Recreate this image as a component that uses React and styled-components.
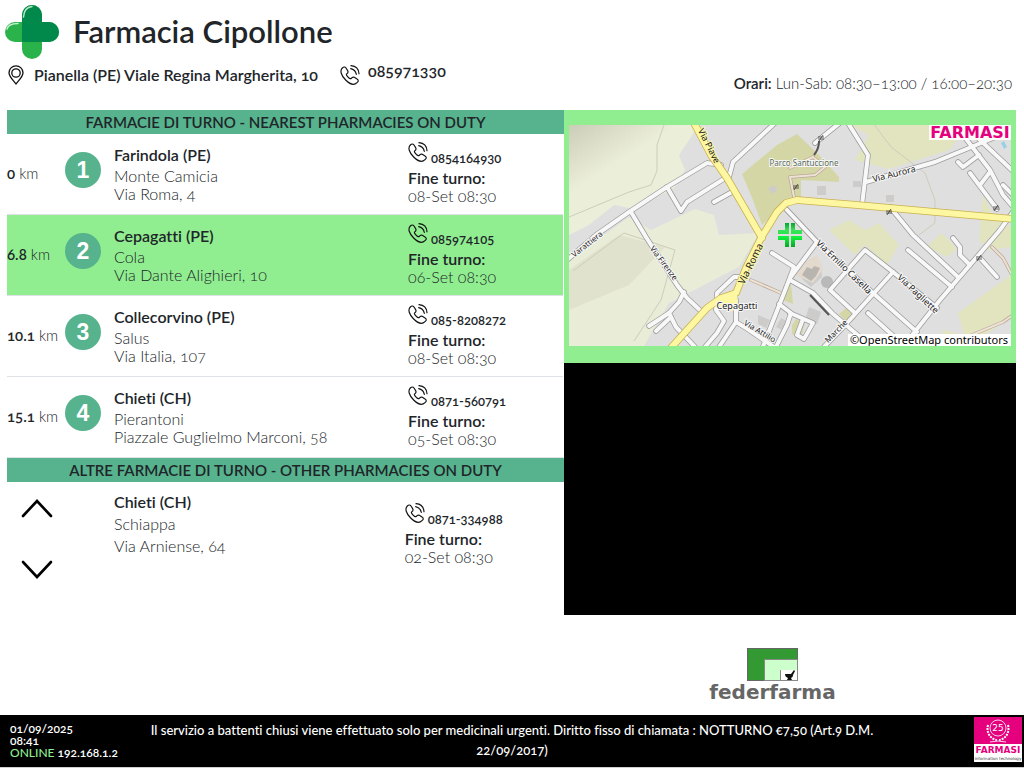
import React from 'react';
import styled, { createGlobalStyle } from 'styled-components';

const GlobalStyle = createGlobalStyle`
    * {
        box-sizing: border-box;
    }

    body {
        margin: 0;
        background-color: #fff;
        color: #212529;
        font-family: Lato, 'Open Sans', sans-serif;
        font-size: 16px;
        font-weight: 300;
        font-variant-numeric: oldstyle-nums;
        font-variant-ligatures: none;
    }
`;

const Page = styled.div`
    display: flex;
    flex-direction: column;
    min-height: 100vh;
`;

const Header = styled.header`
    display: flex;
    flex-direction: column;
    height: 110px;
    padding: 5px 12px 0 5px;
`;

const Brand = styled.div`
    display: flex;
    align-items: flex-start;
    gap: 14px;
    height: 54px;

    > svg {
        width: 54px;
        height: 54px;
    }
`;

const Title = styled.h1`
    margin: 0;
    padding-top: 8px;
    font-size: 31px;
    line-height: 36px;
    font-weight: 600;
`;

const Contacts = styled.div`
    display: flex;
    align-items: flex-start;
    height: 34px;
    padding-top: 6px;
    line-height: 20px;
    font-weight: 600;
`;

const Address = styled.span`
    display: flex;
    gap: 9px;
    margin-right: 22px;
`;

const MainPhone = styled.span`
    display: flex;
    gap: 8px;
    line-height: 12px;
`;

const Hours = styled.div`
    align-self: flex-end;
    margin-left: auto;
    font-size: 15px;
    line-height: 20px;
    font-weight: 300;
`;

const Strong = styled.strong`
    font-weight: 600;
`;

const Main = styled.main`
    display: grid;
    grid-template-columns: 557fr 452fr;
    flex: 1;
    padding: 0 8px 0 7px;
`;

const SectionTitle = styled.h2`
    margin: 0;
    background-color: #56b38d;
    text-align: center;
    font-size: 15px;
    line-height: 24px;
    font-weight: 600;
`;

const DutyRow = styled.li`
    display: grid;
    grid-template-columns: 57px 50px 294fr 155fr;
    height: 81px;
    border-bottom: 1px solid #dee2e6;
    background-color: ${({ $active }) => ($active ? '#90ee90' : 'transparent')};
`;

const DutyList = styled.ol`
    margin: 0 1px 0 0;
    padding: 0;
    list-style: none;
`;

const Distance = styled.span`
    align-self: center;
    padding-bottom: 2px;
    font-size: 15px;
    white-space: nowrap;
`;

const Marker = styled.span`
    display: flex;
    align-items: center;
    justify-content: center;
    align-self: center;
    width: 36px;
    height: 36px;
    margin: 0 0 8px 1px;
    border-radius: 50%;
    background-color: #56b38d;
    color: #fff;
    font-family: 'Liberation Sans', sans-serif;
    font-size: 23px;
    font-weight: 700;
`;

const Place = styled.div`
    display: flex;
    flex-direction: column;
    padding-top: 11px;
    line-height: ${({ $loose }) => ($loose ? '22px' : '18px')};

    > strong {
        line-height: ${({ $loose }) => ($loose ? '18px' : '20px')};
        margin-bottom: 2px;
    }
`;

const Shift = styled.div`
    display: flex;
    flex-direction: column;
    padding-top: 8px;
    line-height: 18px;
`;

const Phone = styled.span`
    display: flex;
    align-items: flex-end;
    gap: 3px;
    height: 24px;
    margin-bottom: 3px;
    font-size: 13px;
    line-height: 16px;
    font-weight: 600;

    > svg {
        align-self: flex-start;
    }
`;

const OtherRow = styled.div`
    display: grid;
    grid-template-columns: 107px 290fr 159fr;
    height: 108px;

    ${Shift} {
        padding-top: 21px;
    }
`;

const Pager = styled.div`
    display: flex;
    flex-direction: column;
    justify-content: space-between;
    align-items: flex-start;
    padding: 16px 0 10px 14px;
`;

const PagerButton = styled.button`
    display: flex;
    padding: 0;
    border: 0;
    background: none;
    color: #000;
    cursor: pointer;
`;

const MapPanel = styled.div`
    height: 253px;
    padding: 15px 5px 17px;
    background-color: #90ee90;

    > svg {
        display: block;
        width: 100%;
        height: 221px;
    }
`;

const VideoPanel = styled.div`
    height: 252px;
    background-color: #000;
`;

const Partner = styled.div`
    display: flex;
    flex-direction: column;
    align-items: center;
    margin-top: 33px;
    padding-right: 35px;
    color: #666;
    font-family: 'DejaVu Sans', sans-serif;
    font-size: 20px;
    line-height: 20px;
    font-weight: 700;
`;

const Footer = styled.footer`
    display: grid;
    grid-template-columns: 135px 1fr 145px;
    height: 53px;
    padding-left: 10px;
    border-bottom: 1px solid #d0d0d0;
    background-color: #000;
    color: #fff;
    font-size: 13px;
    font-weight: 600;
`;

const Status = styled.div`
    display: flex;
    flex-direction: column;
    padding-top: 8px;
    font-size: 12px;
    line-height: 12px;
`;

const Online = styled.span`
    color: #90ee90;
    font-weight: 500;
`;

const Notice = styled.p`
    margin: 0;
    padding-top: 5px;
    text-align: center;
    line-height: 20px;
    font-weight: 500;
`;

const Badge = styled.div`
    justify-self: end;
    padding: 2px 2px 0 0;
`;

const CrossLogo = () => (
    <svg viewBox="0 0 54 54" aria-hidden="true">
        <rect x="0" y="17" width="54" height="20" rx="10" fill="#2ab34b" />
        <rect x="17" y="0" width="20" height="54" rx="10" fill="#2ab34b" />
        <path d="M17 37V10a10 10 0 0 1 20 0v7h7a10 10 0 0 1 0 20z" fill="#00894a" />
        <path d="M18.500 12C19 5 22 2 27 1.500" fill="none" stroke="#b8e6c9" strokeWidth="1.500" strokeLinecap="round" />
        <path d="M2 24C3 20 7 18.500 13 18.500" fill="none" stroke="#c8f0cf" strokeWidth="1.500" strokeLinecap="round" />
    </svg>
);

const PinIcon = () => (
    <svg width="20" height="20" viewBox="0 0 20 20" fill="none" stroke="#111" strokeWidth="1.300" aria-hidden="true">
        <path d="M11 19C9 16 4 12 4 7.800a7 7 0 0 1 14 0C18 12 13 16 11 19z" />
        <circle cx="11" cy="8" r="4.200" />
    </svg>
);

const PhoneIcon = () => (
    <svg width="20" height="20" viewBox="0 0 60 60" fill="none" stroke="#111" strokeWidth="3.500" strokeLinecap="round" strokeLinejoin="round" aria-hidden="true">
        <path d="M7 9C-1 17 3 31 17 45c13 13 26 16 34 8 5-4 5-8 0-11l-8-5c-4-2-7 0-9 3-2 2-5 1-9-3-5-5-7-8-5-10 5-3 5-6 3-10l-5-8c-3-4-7-4-11 0z" />
        <path d="M33 2c14 1 23 10 24 24M32 11c9 2 15 8 17 17" />
    </svg>
);

const Chevron = ({ down }) => (
    <svg width="32" height="20" viewBox="0 0 32 20" fill="none" stroke="currentColor" strokeWidth="2.600" strokeLinecap="round" aria-hidden="true">
        <path d={down ? 'M2 2l14 15L30 2' : 'M2 18L16 3l14 15'} />
    </svg>
);

const fields = [
    'M0 0H130L120 15L110 30L116 45L105 63L65 84L45 80L20 100L0 110z',
    'M82 105L126 84L145 90L150 110L190 108L170 142L100 178L75 221H0V135L60 92z',
    'M280 0H400L380 25L320 44L286 35L300 10z',
    'M260 105L280 95L296 105L310 98L330 120L318 140L296 120L286 130z',
    'M389 188L442 150V192L400 221H365L375 205L395 210z',
    'M358 122L372 108L380 115L388 124L378 132z',
    'M414 70L425 92L442 102V122L420 125L410 115z',
];

const parks = [
    'M173 49L208 20L228 9L250 30L270 52V57L232 55V76L215 80L193 100L184 75z',
    'M270 189l7-6 10 10-7 6z',
    'M223 200l4-6 9 4-4 15-9-4z',
    'M214 161l8-2 2 20-10-4z',
];

const buildings = [
    'M232 145l20-7 1 14-11 10-9-8z',
    'M189 190l12 5-4 8-8-4z',
    'M204 60l5 4-5 5-5-5z',
    'M248 61h9v9h-9z',
    'M284 56h8v6h-8z',
    'M317 70h8v7h-8z',
    'M240 182l12 5-4 12-12-4z',
    'M212 193l8 4-5 9-8-4z',
];

const mainRoads = [
    'M124 -4L142 30L158 53L193 113',
    'M100 225L138 183L152 173L167 168L177 143L192 113L208 87L217 78L228 75L288 80L446 94',
];

const roads = [
    'M-3 136L27 110L60 87L98 62L138 38L152 40',
    'M98 62L112 86L118 77L158 52',
    'M145 77L163 67',
    'M206 -2L164 37L160 52',
    'M62 87L77 112L108 160L118 173L133 187',
    'M115 167L110 177L100 188L80 201',
    'M102 192L87 206',
    'M100 188L107 202L126 222',
    'M173 152L165 152L148 168L147 185L155 196L148 208L136 222',
    'M167 175V197L150 222',
    'M167 197L177 203L205 222',
    'M203 128L225 142L215 168L193 224',
    'M210 179L222 188L218 200L207 222',
    'M217 84L248 117L304 168L348 207',
    'M221 155L244 168L263 188L291 212',
    'M248 117L221 153',
    'M324 147L296 125L261 165L286 188',
    'M324 147L278 198L255 222',
    'M324 147L368 183',
    'M446 84L431 105L371 175L332 224',
    'M321 82L344 110L389 152',
    'M339 125L383 162',
    'M384 113L391 122V130L401 140',
    'M411 133L428 152',
    'M299 188L330 216',
    'M221 188L244 198L235 214L228 210L234 194',
    'M279 -2L299 30L293 80',
    'M297 57L366 37L446 4',
    'M246 18L272 -3',
    'M394 10L421 45L434 70L446 84',
    'M410 14L446 48',
    'M389 37L394 42L410 30',
    'M401 48L428 84',
    'M411 60L421 47',
    'M434 60L446 72',
];

const footpaths = [
    'M221 43L244 32L256 42L246 50L221 52L226 77',
    'M182 155L212 168',
    'M423 122L434 133L442 148',
    'M398 212L434 197L444 190',
];

const tracks = ['M0 92L60 67L82 60L88 46V20L95 0', 'M4 146L55 108L106 125L92 175L65 216', 'M304 -2L322 22L356 48L366 75V98L350 110'];

const Roads = ({ paths, casing, fill, width }) => (
    <g fill="none" strokeLinejoin="round" strokeLinecap="round">
        {paths.map(d => <path key={d} d={d} stroke={casing} strokeWidth={width + 1.5} />)}
        {paths.map(d => <path key={d} d={d} stroke={fill} strokeWidth={width} />)}
    </g>
);

const streets = [
    { name: 'Via Piave', x: 140, y: 21, angle: 63, size: 9 },
    { name: 'Via Roma', x: 182, y: 139, angle: -64, size: 10 },
    { name: 'Via Aurora', x: 325, y: 49, angle: -14, size: 9 },
    { name: 'Via Firenze', x: 95, y: 138, angle: 53, size: 8 },
    { name: 'Varattiera', x: 18, y: 119, angle: -38, size: 8 },
    { name: 'Via Emilio Casella', x: 275, y: 142, angle: 44, size: 9 },
    { name: 'Via Pagliette', x: 349, y: 169, angle: 43, size: 9 },
    { name: 'Via Attilio', x: 191, y: 206, angle: 31, size: 8 },
    { name: 'Marche', x: 267, y: 206, angle: -46, size: 8 },
];

const StreetMap = () => (
    <svg viewBox="0 0 442 221" preserveAspectRatio="xMidYMid slice" role="img" aria-label="Cepagatti">
        <defs>
            <linearGradient id="hill" x1="0" y1="0" x2="0.300" y2="0.400">
                <stop offset="0" stopColor="#cccdb9" />
                <stop offset="1" stopColor="#ebeed9" />
            </linearGradient>
            <linearGradient id="cross" x1="0" y1="0" x2="0" y2="1">
                <stop offset="0" stopColor="#06a52e" />
                <stop offset="0.300" stopColor="#3be05a" />
                <stop offset="0.600" stopColor="#10f03c" />
                <stop offset="1" stopColor="#08a528" />
            </linearGradient>
        </defs>
        <rect width="442" height="221" fill="#dfdfdf" />
        {fields.map((d, i) => <path key={d} d={d} fill={i === 0 ? 'url(#hill)' : i === 1 ? '#e9ecd6' : '#e2e4c0'} />)}
        <path d="M0 145L50 110L96 122L60 160L0 185z" fill="#e1e2cd" />
        {parks.map(d => <path key={d} d={d} fill="#d5d6a5" />)}
        {buildings.map(d => <path key={d} d={d} fill="#cdcccb" />)}
        <path d="M226 142l22-12 6 14-10 14-18-8z" fill="#e3d9cc" />
        <path d="M233 150l5-8 5 2 2-3 6 2-4 8-5 5z" fill="#b8b4b0" />
        <circle cx="258" cy="157" r="6" fill="#b9b9b9" />
        <path d="M432 18l3 6 3-2-3-6z" fill="#9bd0e2" />
        {tracks.map(d => <path key={d} d={d} fill="none" stroke="#cdcdbb" strokeWidth="1" />)}
        <Roads paths={footpaths} casing="#b9a895" fill="#eee2d6" width={2} />
        <Roads paths={roads} casing="#9c9c9c" fill="#f8f8f8" width={4} />
        <Roads paths={mainRoads} casing="#c9b04e" fill="#fdf7a2" width={6} />
        <path d="M167 165l-12 8-9 6 8 5 10 2 5-8z" fill="#fdf7a2" />
        <path d="M241 170l19 20" stroke="#555" strokeWidth="2" />
        <path d="M250 16q0 8-5 14" fill="none" stroke="#555" strokeWidth="2" />
        {[[252, 13], [227, 62], [320, 87], [427, 83], [410, 133]].map(([x, y]) => (
            <path key={x} d={`M${x - 3} ${y - 1}h6m-6 2h6m-5 2l4-6`} fill="none" stroke="#333" strokeWidth="0.800" />
        ))}
        <g fontFamily="Noto Sans, sans-serif" fontWeight="400" fill="#222" stroke="#f8f8f8" strokeWidth="2" paintOrder="stroke" textAnchor="middle">
            {streets.map(({ name, x, y, angle, size }) => (
                <text key={name} x={x} y={y} dy="3" fontSize={size} stroke={name === 'Via Piave' || name === 'Via Roma' ? '#fdf7a2' : '#f8f8f8'} transform={`rotate(${angle} ${x} ${y})`}>{name}</text>
            ))}
            <text x="235" y="41" fontSize="8" fill="#566b56">Parco Santuccione</text>
            <text x="168" y="184" fontSize="9">Cepagatti</text>
        </g>
        <path d="M216 98h4v11h-11v-4h7zM222 98h4v7h7v4h-11zM209 111h11v11h-4v-7h-7zM222 111h11v4h-7v7h-4z" fill="url(#cross)" />
        <rect x="360" y="0" width="82" height="15" fill="#fff" opacity="0.900" />
        <text x="401" y="13" textAnchor="middle" fontFamily="DejaVu Sans, sans-serif" fontSize="16" fontWeight="700" fill="#e5007e">FARMASI</text>
        <rect x="279" y="209" width="163" height="12" fill="#fff" />
        <text x="360" y="219" textAnchor="middle" fontFamily="Noto Sans, sans-serif" fontSize="11" fontWeight="400" fill="#000">©OpenStreetMap contributors</text>
    </svg>
);

const FederfarmaLogo = () => (
    <svg width="52" height="34" viewBox="0 0 52 34" aria-hidden="true">
        <rect x="0.500" y="0.500" width="50" height="32" fill="#339933" stroke="#666" />
        <path d="M17.500 32.500V11.500h33v21z" fill="#ccffcc" stroke="#888" />
        <path d="M34 32V22h16v10z" fill="#fff" />
        <path d="M33.500 22v10" stroke="#888" />
        <path d="M38 26h6l3-4 1 1-2 4c0 2-1 2-2 3l1 2h-5l1-2c-2-1-3-2-3-4z" fill="#111" />
    </svg>
);

const FarmasiBadge = () => (
    <svg width="48" height="45" viewBox="0 0 48 45" role="img" aria-label="FARMASI">
        <rect width="48" height="45" fill="#e5007e" />
        <rect y="27" width="48" height="18" fill="#fff" />
        <text x="24" y="36" textAnchor="middle" fontFamily="DejaVu Sans, sans-serif" fontSize="9" fontWeight="700" fill="#e5007e">FARMASI</text>
        <g fill="none" stroke="#fff" strokeWidth="0.800">
            <circle cx="24" cy="11" r="8" />
            <path d="M14 8c-2 7 2 14 9 15M34 8c2 7-2 14-9 15" strokeDasharray="2 1" strokeWidth="2" />
            <path d="M16 25q8-2 16 0" />
        </g>
        <g fontFamily="DejaVu Sans, sans-serif" fontWeight="400" textAnchor="middle">
            <text x="24" y="14" fontSize="9" fill="#fff">25</text>
            <text x="24" y="43" fontSize="4" fill="#333">information technology</text>
        </g>
    </svg>
);

const pharmacies = [
    { km: '0', city: 'Farindola (PE)', name: 'Monte Camicia', street: 'Via Roma, 4', phone: '0854164930', end: '08-Set 08:30' },
    { km: '6.8', city: 'Cepagatti (PE)', name: 'Cola', street: 'Via Dante Alighieri, 10', phone: '085974105', end: '06-Set 08:30', active: true },
    { km: '10.1', city: 'Collecorvino (PE)', name: 'Salus', street: 'Via Italia, 107', phone: '085-8208272', end: '08-Set 08:30' },
    { km: '15.1', city: 'Chieti (CH)', name: 'Pierantoni', street: 'Piazzale Guglielmo Marconi, 58', phone: '0871-560791', end: '05-Set 08:30' },
];

const PlaceInfo = ({ city, name, street, loose }) => (
    <Place $loose={loose}>
        <Strong>{city}</Strong>
        <span>{name}</span>
        <span>{street}</span>
    </Place>
);

const ShiftInfo = ({ phone, end }) => (
    <Shift>
        <Phone><PhoneIcon />{phone}</Phone>
        <Strong>Fine turno:</Strong>
        <span>{end}</span>
    </Shift>
);

const App = () => (
    <Page>
        <GlobalStyle />
        <Header>
            <Brand>
                <CrossLogo />
                <Title>Farmacia Cipollone</Title>
            </Brand>
            <Contacts>
                <Address><PinIcon />Pianella (PE) Viale Regina Margherita, 10</Address>
                <MainPhone><PhoneIcon />085971330</MainPhone>
                <Hours><Strong>Orari:</Strong> Lun-Sab: 08:30–13:00 / 16:00–20:30</Hours>
            </Contacts>
        </Header>
        <Main>
            <section>
                <SectionTitle>FARMACIE DI TURNO - NEAREST PHARMACIES ON DUTY</SectionTitle>
                <DutyList>
                    {pharmacies.map((item, index) => (
                        <DutyRow key={item.phone} $active={item.active}>
                            <Distance><Strong>{item.km}</Strong> km</Distance>
                            <Marker>{index + 1}</Marker>
                            <PlaceInfo city={item.city} name={item.name} street={item.street} />
                            <ShiftInfo phone={item.phone} end={item.end} />
                        </DutyRow>
                    ))}
                </DutyList>
                <SectionTitle>ALTRE FARMACIE DI TURNO - OTHER PHARMACIES ON DUTY</SectionTitle>
                <OtherRow>
                    <Pager>
                        <PagerButton type="button" aria-label="Precedente"><Chevron /></PagerButton>
                        <PagerButton type="button" aria-label="Successiva"><Chevron down /></PagerButton>
                    </Pager>
                    <PlaceInfo city="Chieti (CH)" name="Schiappa" street="Via Arniense, 64" loose />
                    <ShiftInfo phone="0871-334988" end="02-Set 08:30" />
                </OtherRow>
            </section>
            <section>
                <MapPanel><StreetMap /></MapPanel>
                <VideoPanel />
                <Partner>
                    <FederfarmaLogo />
                    federfarma
                </Partner>
            </section>
        </Main>
        <Footer>
            <Status>
                <span>01/09/2025</span>
                <span>08:41</span>
                <span><Online>ONLINE</Online> 192.168.1.2</span>
            </Status>
            <Notice>
                Il servizio a battenti chiusi viene effettuato solo per medicinali urgenti. Diritto fisso di chiamata : NOTTURNO €7,50 (Art.9 D.M. 22/09/2017)
            </Notice>
            <Badge><FarmasiBadge /></Badge>
        </Footer>
    </Page>
);

export default App;
